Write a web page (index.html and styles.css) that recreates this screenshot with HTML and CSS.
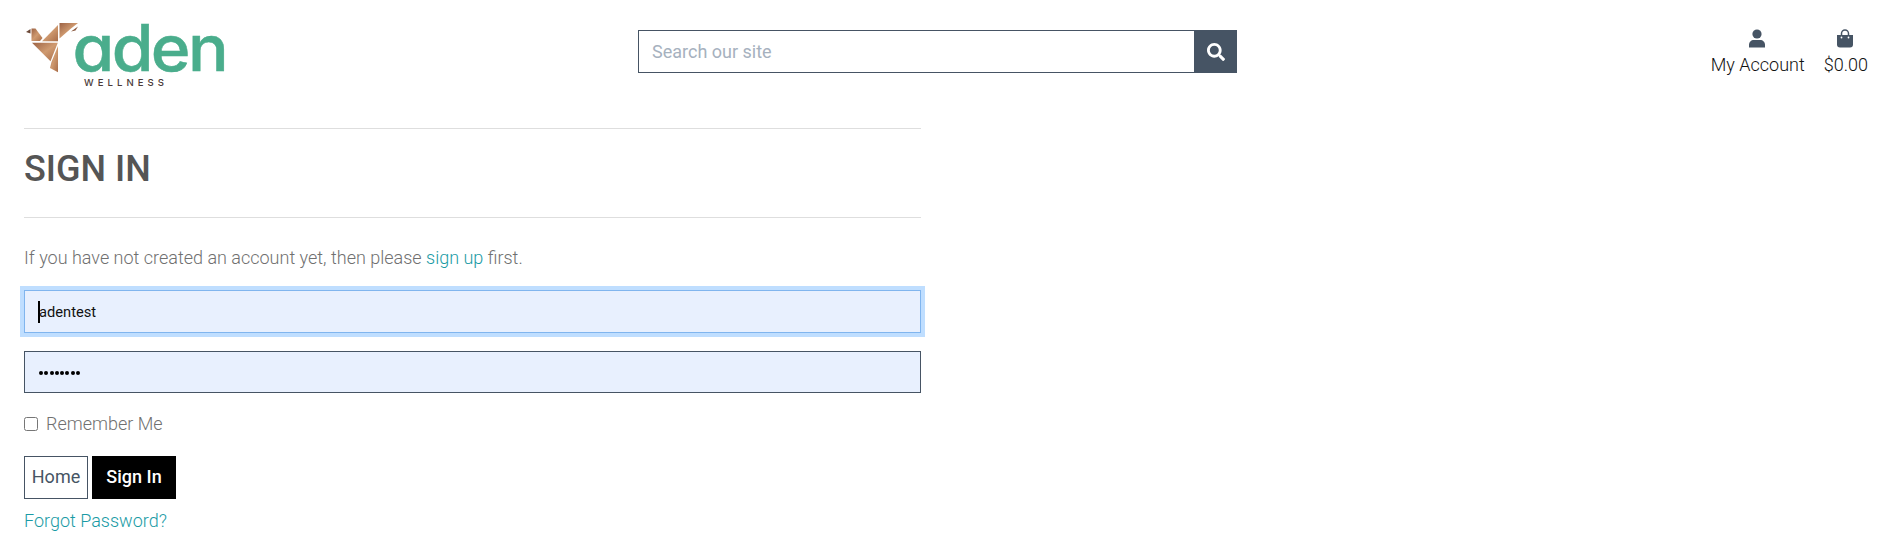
FILE: index.html
```html
<!DOCTYPE html>
<html lang="en">
<head>
<meta charset="utf-8">
<title>Sign In - Aden Wellness</title>
<link rel="stylesheet" href="styles.css">
</head>
<body>
<header class="header">
  <a class="logo" href="#">
    <svg width="206" height="70" viewBox="20 20 206 70" role="img" aria-label="Aden Wellness">
      <defs>
        <linearGradient id="copper" x1="0" y1="0" x2="1" y2="1">
          <stop offset="0" stop-color="#9c6244"/>
          <stop offset=".5" stop-color="#cf9a70"/>
          <stop offset="1" stop-color="#a96d49"/>
        </linearGradient>
      </defs>
      <path fill="#6b4736" d="M26 32l4.500-3v4.500z"/>
      <g fill="url(#copper)">
        <path d="M31.500 28.500h4l7 9.500-2.500 3h-8.500z"/>
        <path d="M58 25v16.200h-16z"/>
        <path d="M59.500 23h18.500l-7 5.500-11.500 10z"/>
        <path d="M32 42.700h25.800l-7.300 18.600z"/>
        <path d="M58 46v26.300l-8-4.300 1.500-6z"/>
      </g>
      <path fill="#8c5a40" d="M71 31.500l7-5-2.500 4z"/>
      <text class="logo-name" x="72.500" y="71" textLength="153.500" lengthAdjust="spacingAndGlyphs">aden</text>
      <text class="logo-tag" x="84" y="86" textLength="80">WELLNESS</text>
    </svg>
  </a>
  <form class="search">
    <input class="search-input" type="text" placeholder="Search our site">
    <button class="search-button" type="button" aria-label="Search">
      <svg width="18" height="18" viewBox="0 0 512 512"><path fill="#fff" d="M505 442.700L405.300 343c-4.500-4.500-10.600-7-17-7H372c27.600-35.300 44-79.700 44-128C416 93.100 322.900 0 208 0S0 93.100 0 208s93.100 208 208 208c48.300 0 92.700-16.400 128-44v16.300c0 6.400 2.500 12.500 7 17l99.700 99.700c9.400 9.400 24.600 9.400 33.900 0l28.300-28.300c9.400-9.400 9.400-24.600.1-34zM208 336c-70.700 0-128-57.200-128-128 0-70.700 57.200-128 128-128 70.700 0 128 57.200 128 128 0 70.700-57.200 128-128 128z"/></svg>
    </button>
  </form>
  <nav class="tools">
    <a class="tool" href="#">
      <svg width="16" height="19" viewBox="0 0 16 19" fill="#465464"><circle cx="8" cy="5" r="4.600"/><path d="M0 18.500v-2.500c0-3 2-5 5-5h6c3 0 5 2 5 5v2.500z"/></svg>
      <span>My Account</span>
    </a>
    <a class="tool" href="#">
      <svg width="16" height="19" viewBox="0 0 16 19"><path d="M4.500 8V4.500a3.500 3.500 0 0 1 7 0V8" fill="none" stroke="#465464" stroke-width="1.500"/><path d="M0 6h16v9.500a3 3 0 0 1-3 3H3a3 3 0 0 1-3-3z" fill="#465464"/><circle cx="4.500" cy="8.500" r=".9" fill="#fff"/><circle cx="11.500" cy="8.500" r=".9" fill="#fff"/></svg>
      <span>$0.00</span>
    </a>
  </nav>
</header>
<main class="signin">
  <h1 class="title">SIGN IN</h1>
  <p class="intro">If you have not created an account yet, then please <a class="link" href="#">sign up</a> first.</p>
  <div class="field field-focused"><span class="caret"></span>adentest</div>
  <div class="field field-password"><i></i><i></i><i></i><i></i><i></i><i></i><i></i><i></i></div>
  <label class="remember"><input class="check" type="checkbox"><span>Remember Me</span></label>
  <div class="actions">
    <a class="button button-home" href="#">Home</a>
    <button class="button button-submit" type="button">Sign In</button>
  </div>
  <a class="link forgot" href="#">Forgot Password?</a>
</main>
</body>
</html>
```
FILE: styles.css
```css
* { box-sizing: border-box; }
body {
  margin: 0;
  background: #fff;
  color: #707070;
  font: 300 18px/27px Roboto, sans-serif;
}
a { text-decoration: none; }
.header {
  display: grid;
  grid-template-columns: 618px 599px 1fr;
  height: 128px;
  padding: 20px 13px 0 20px;
  align-items: start;
}
.logo svg { display: block; overflow: visible; }
.logo-name {
  font: 500 64px Inter, sans-serif;
  font-feature-settings: "cv11";
  letter-spacing: -2.500px;
  fill: #4aad8c;
  stroke: #4aad8c;
  stroke-width: .5px;
}
.logo-tag { font: 500 9.600px Inter, sans-serif; fill: #4a3a38; }
.search { display: flex; height: 43px; margin-top: 10px; }
.search-input {
  flex: 1;
  min-width: 0;
  padding: 0 14px 0 13px;
  border: 1px solid #465464;
  border-right: 0;
  border-radius: 0;
  font: 400 18px Roboto, sans-serif;
}
.search-input::placeholder { color: #a6b1be; opacity: 1; }
.search-button {
  display: flex;
  align-items: center;
  justify-content: center;
  width: 43px;
  padding: 0;
  border: 0;
  background: #465464;
}
.tools { display: flex; justify-content: flex-end; gap: 19px; padding-top: 9px; }
.tool {
  display: flex;
  flex-direction: column;
  align-items: center;
  color: #111;
}
.tool svg { margin-right: 2px; }
.tool span { margin-top: 3px; }
.signin { width: 897px; margin-left: 24px; }
.title {
  height: 90px;
  margin: 0 0 26px;
  padding-top: 17px;
  border: solid #dedede;
  border-width: 1px 0;
  color: #555;
  font: 500 36px/46px Roboto, sans-serif;
}
.intro { margin: 0 0 19px; }
.link { color: #1a9ba5; }
.field {
  display: flex;
  align-items: center;
  height: 43px;
  padding-left: 14px;
  border: 1px solid #465464;
  background: #e8f0fe;
  color: #111;
  font: 400 14.700px Roboto, sans-serif;
}
.field-focused { border-color: #80b5ee; box-shadow: 0 0 0 4px #bfdeff; }
.caret { width: 2px; height: 22px; margin-right: -1px; margin-left: -1px; background: #000; }
.field-password { height: 42px; margin-top: 18px; gap: 1.300px; padding: 2px 0 0 14px; }
.field-password i { width: 4px; height: 4px; border-radius: 50%; background: #000; }
.remember { display: flex; align-items: center; gap: 8px; margin-top: 17px; }
.check { width: 14px; height: 14px; margin: 0; }
.actions { display: flex; gap: 4px; height: 43px; margin: 19px 0 8px; }
.button {
  display: flex;
  align-items: center;
  justify-content: center;
  padding: 0 0 2px;
  border: 1px solid #465464;
  font: 400 18px Roboto, sans-serif;
}
.button-home { width: 64px; color: #465464; }
.button-submit { width: 84px; border-color: #000; background: #000; color: #fff; font-weight: 500; }
.forgot { display: inline-block; }
```
